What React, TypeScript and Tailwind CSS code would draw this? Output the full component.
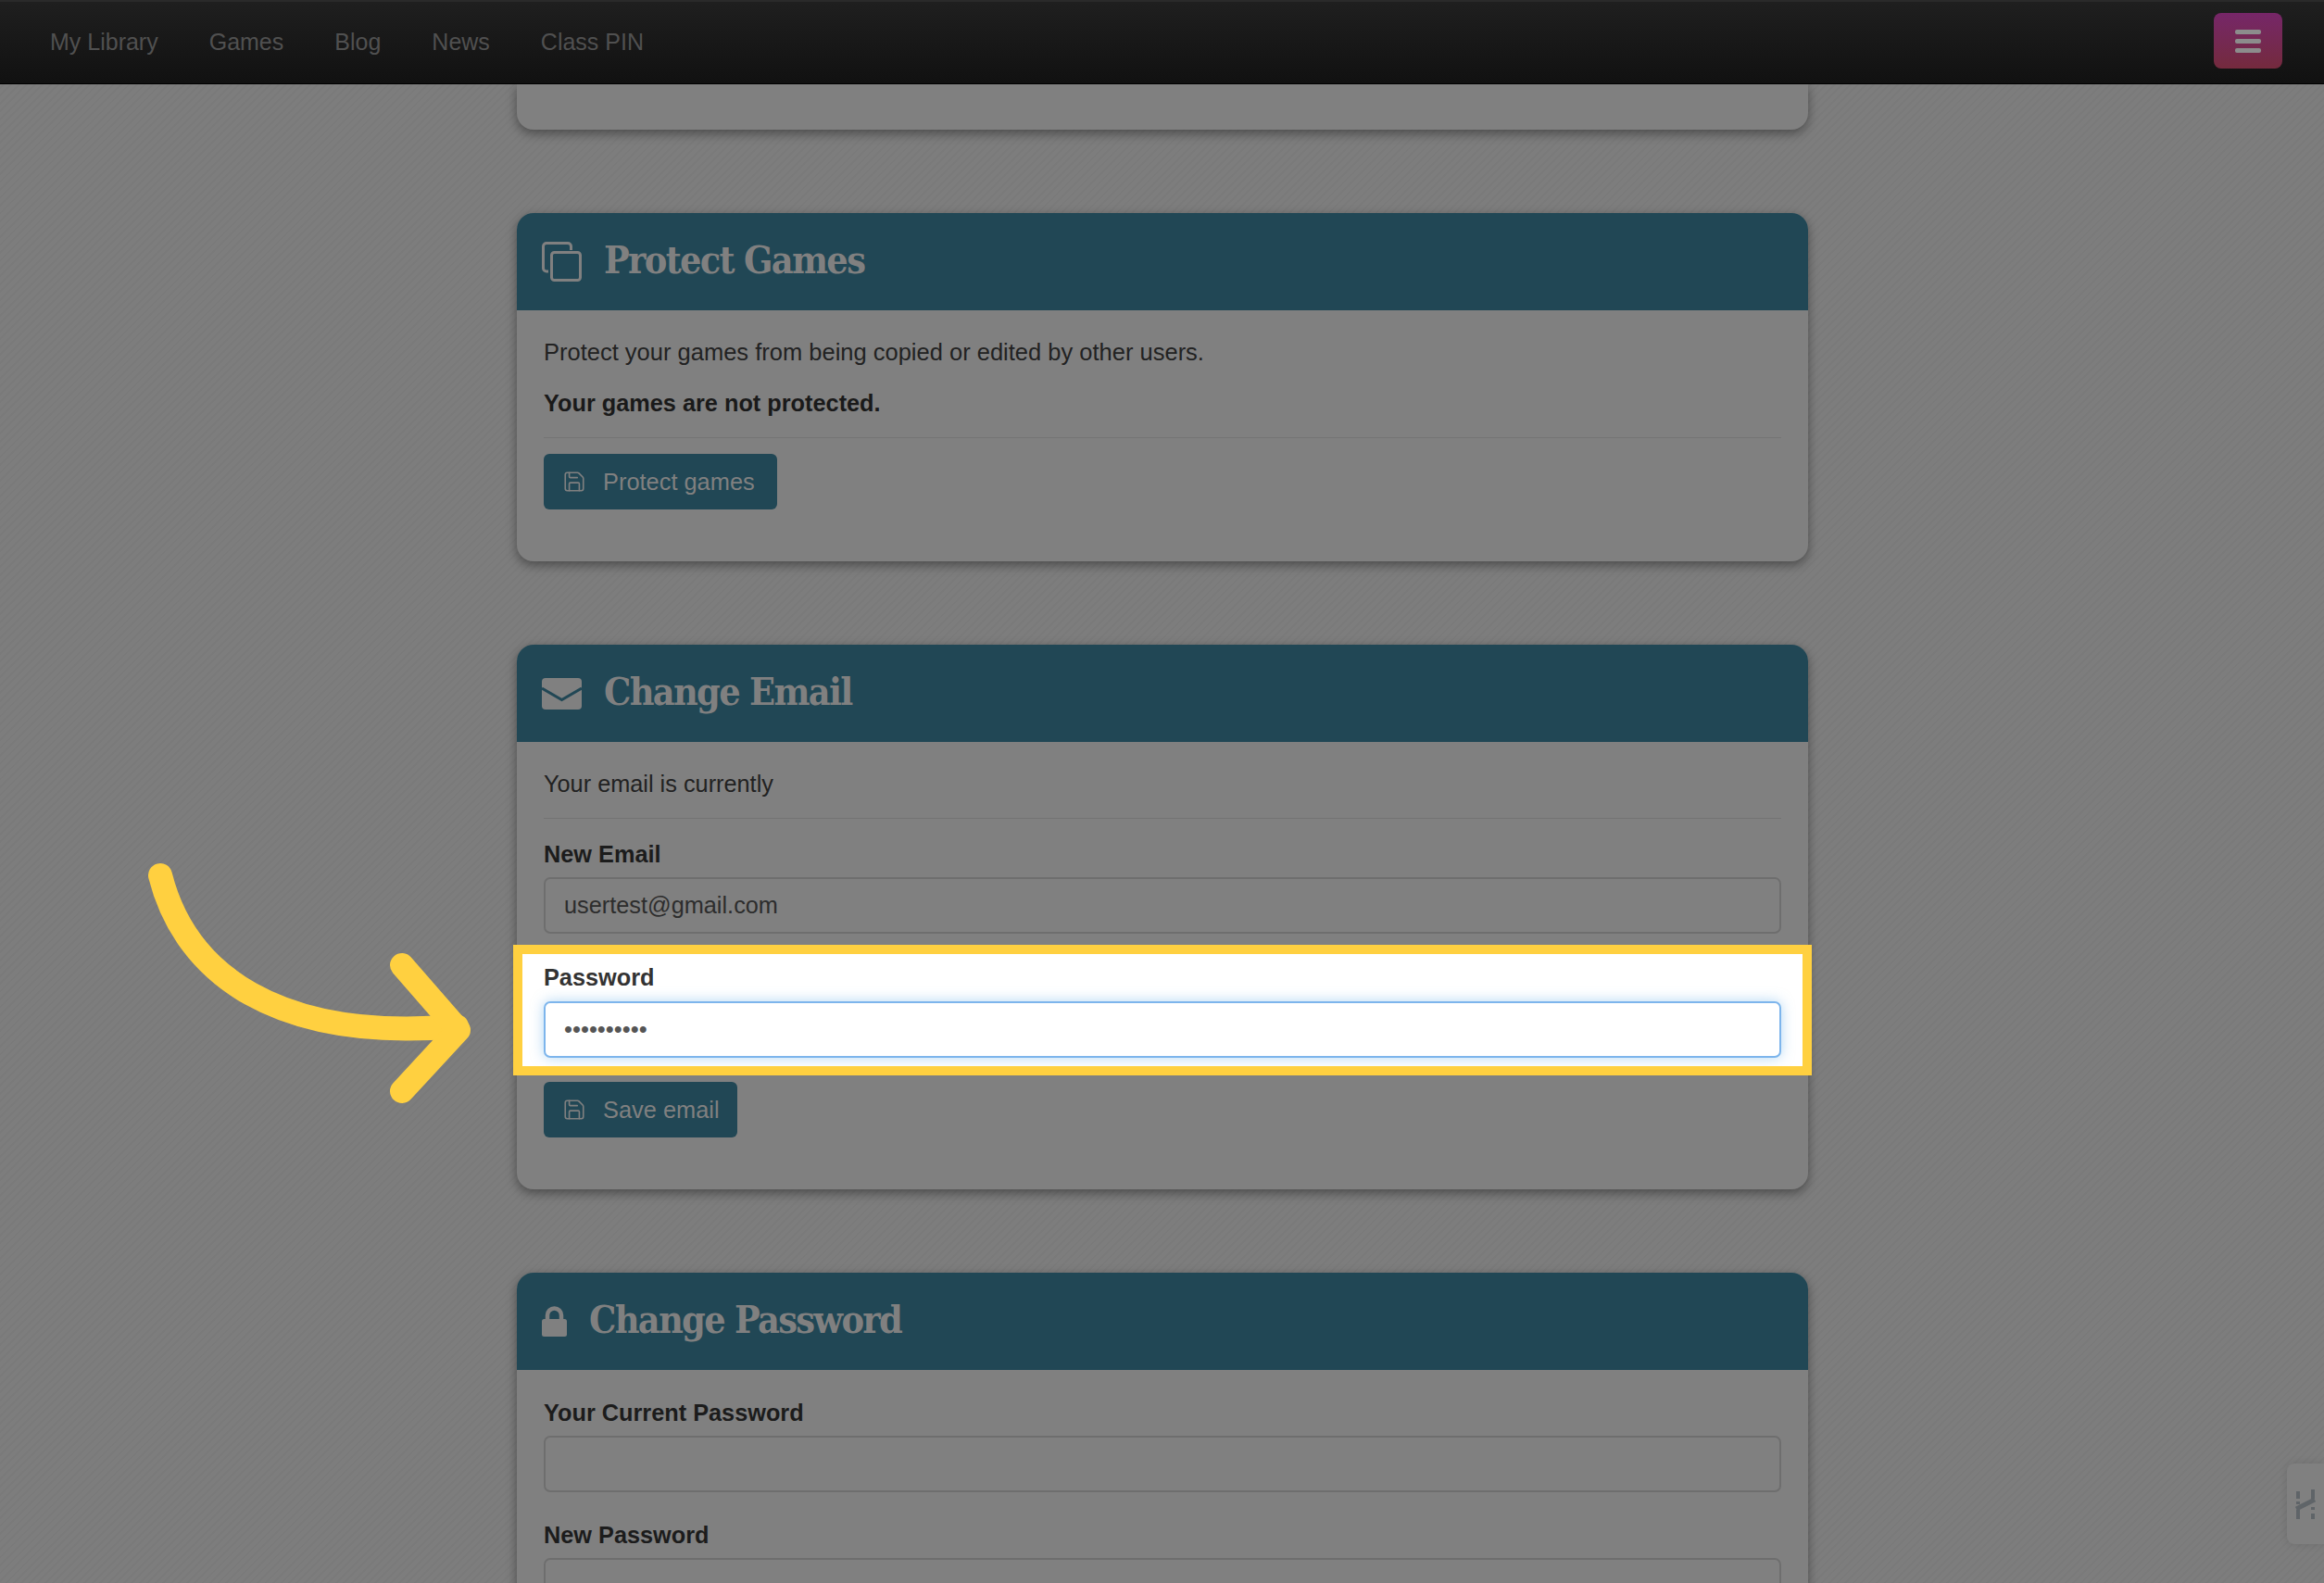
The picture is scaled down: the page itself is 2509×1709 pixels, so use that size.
import { Save } from "lucide-react";

const sans = "font-['Liberation_Sans',Arial,sans-serif]";

function Header({ icon, title }: { icon: React.ReactNode; title: string }) {
  return (
    <div className="h-[105px] bg-[#214755] rounded-t-[18px] flex items-center pl-[27px] gap-[24px]">
      {icon}
      <h2 className="font-['DejaVu_Serif',serif] font-bold text-[41px] text-[#808080] [font-stretch:condensed] leading-none tracking-[-1.7px] pb-[2px]">
        {title}
      </h2>
    </div>
  );
}

function Btn({ label, w }: { label: string; w: string }) {
  return (
    <button className={`h-[60px] ${w} rounded-[6px] bg-[#214755] text-[#808080] flex items-center pl-[20px] gap-[18px] text-[25.4px]`}>
      <Save size={26} strokeWidth={1.5} />
      {label}
    </button>
  );
}

function Field({ label, value }: { label: string; value?: string }) {
  return (
    <div className="flex flex-col">
      <label className="font-bold text-[25.3px] text-[#1c1c1c] leading-[34px] mb-[8px]">{label}</label>
      <div className="h-[61px] rounded-[7px] border-2 border-[#6e6e6e] flex items-center px-[20px] text-[25.3px] text-[#2d2d2d]">
        {value}
      </div>
    </div>
  );
}

export default function App() {
  return (
    <div className={`${sans} relative h-[1709px] overflow-hidden flex flex-col bg-[#7b7b7b] bg-[repeating-linear-gradient(135deg,#7a7a7a_0px,#7a7a7a_2px,#7d7d7d_2px,#7d7d7d_6px)]`}>
      <nav className="h-[91px] shrink-0 bg-gradient-to-b from-[#1f1f1f] to-[#111111] border-t-2 border-t-[#2a2a2a] border-b border-b-black flex items-center pl-[54px] pr-[45px] text-[25px] text-[#505050] relative z-10">
        <a className="mr-[55px]">My Library</a>
        <a className="mr-[55px]">Games</a>
        <a className="mr-[55px]">Blog</a>
        <a className="mr-[55px]">News</a>
        <a>Class PIN</a>
        <button className="ml-auto mb-[4px] w-[74px] h-[60px] rounded-[8px] bg-gradient-to-b from-[#762668] to-[#742a3d] flex flex-col items-center justify-center gap-[5px]">
          <span className="block w-[28px] h-[5px] rounded-[2px] bg-[#8c8c8c]" />
          <span className="block w-[28px] h-[5px] rounded-[2px] bg-[#8c8c8c]" />
          <span className="block w-[28px] h-[5px] rounded-[2px] bg-[#8c8c8c]" />
        </button>
      </nav>

      <main className="w-[1394px] ml-[558px] flex flex-col gap-[90px]">
        <section className="h-[49px] bg-[#808080] rounded-b-[18px] shadow-[0_4px_12px_rgba(0,0,0,0.4)]" />

        <section className="h-[376px] shrink-0 bg-[#808080] rounded-[18px] shadow-[0_4px_12px_rgba(0,0,0,0.4)]">
          <Header
            title="Protect Games"
            icon={
              <svg width="43" height="43" viewBox="0 0 43 43" fill="none" stroke="#808080" strokeWidth="3">
                <path d="M7 32H5a3.500 3.500 0 0 1-3.500-3.500V5A3.500 3.500 0 0 1 5 1.500h23A3.500 3.500 0 0 1 31.500 5v4" />
                <rect x="10.500" y="11.500" width="31" height="30" rx="3" />
              </svg>
            }
          />
          <div className="px-[29px] text-[25.5px] text-[#222222]">
            <p className="leading-[34px] mt-[28px]">Protect your games from being copied or edited by other users.</p>
            <p className="leading-[34px] mt-[21px] font-bold text-[#1a1a1a] text-[25.3px]">Your games are not protected.</p>
            <hr className="border-[#747474] mt-[20px] mb-[17px]" />
            <Btn label="Protect games" w="w-[252px]" />
          </div>
        </section>

        <section className="h-[588px] shrink-0 bg-[#808080] rounded-[18px] shadow-[0_4px_12px_rgba(0,0,0,0.4)]">
          <Header
            title="Change Email"
            icon={
              <svg width="43" height="34" viewBox="0 0 43 34" fill="none">
                <rect width="43" height="34" rx="4" fill="#808080" />
                <path d="M0 11L21.500 23.500L43 11" stroke="#214755" strokeWidth="3" />
              </svg>
            }
          />
          <div className="px-[29px] text-[25.3px] text-[#222222]">
            <p className="leading-[34px] mt-[28px]">Your email is currently</p>
            <hr className="border-[#747474] mt-[20px] mb-[21px]" />
            <Field label="New Email" value="usertest@gmail.com" />
            <div className="mt-[22px] -mx-[23px] px-[23px] pb-[9px] bg-white outline-[10px] outline-solid outline-[#ffd040] relative">
              <label className="block pt-[8px] font-bold text-[25.3px] text-[#333333] leading-[34px] mb-[9px]">Password</label>
              <div className="h-[61px] rounded-[7px] border-2 border-[#7db5ec] shadow-[0_0_14px_rgba(102,175,233,0.5)] bg-white flex items-center px-[20px] text-[#555555] text-[25.6px]">
                ••••••••••
              </div>
            </div>
            <div className="mt-[17px]">
              <Btn label="Save email" w="w-[209px]" />
            </div>
          </div>
        </section>

        <section className="shrink-0 bg-[#808080] rounded-t-[18px] shadow-[0_4px_12px_rgba(0,0,0,0.4)] pb-[40px]">
          <Header
            title="Change Password"
            icon={
              <svg width="27" height="33" viewBox="0 0 27 33" fill="none">
                <path d="M6 16V10a7.500 7.500 0 0 1 15 0V16" stroke="#808080" strokeWidth="4.500" />
                <rect y="14" width="27" height="19" rx="2.500" fill="#808080" />
              </svg>
            }
          />
          <div className="px-[29px] pt-[29px] flex flex-col gap-[29px]">
            <Field label="Your Current Password" />
            <Field label="New Password" />
          </div>
        </section>
      </main>

      <svg className="absolute left-0 top-0 pointer-events-none" width="560" height="1200" viewBox="0 0 560 1200" fill="none" stroke="#ffd040" strokeWidth="26" strokeLinecap="round" strokeLinejoin="round">
        <path d="M173 945C200 1052 300 1125 493 1108" />
        <path d="M434 1042L495 1112L434 1178" />
      </svg>

      <div className="absolute right-0 top-[1580px] w-[40px] h-[87px] rounded-l-[8px] bg-[#808080] shadow-[0_0_10px_rgba(0,0,0,0.12)] flex items-center justify-center">
        <svg width="22" height="32" viewBox="0 0 22 32" fill="none" stroke="#5f6468" strokeWidth="4">
          <path d="M3 2V10M3 13V16M3 22V32M19 0V10M19 19V22M19 26V32" />
          <path d="M1 21L21 11" strokeWidth="5" />
        </svg>
      </div>
    </div>
  );
}
